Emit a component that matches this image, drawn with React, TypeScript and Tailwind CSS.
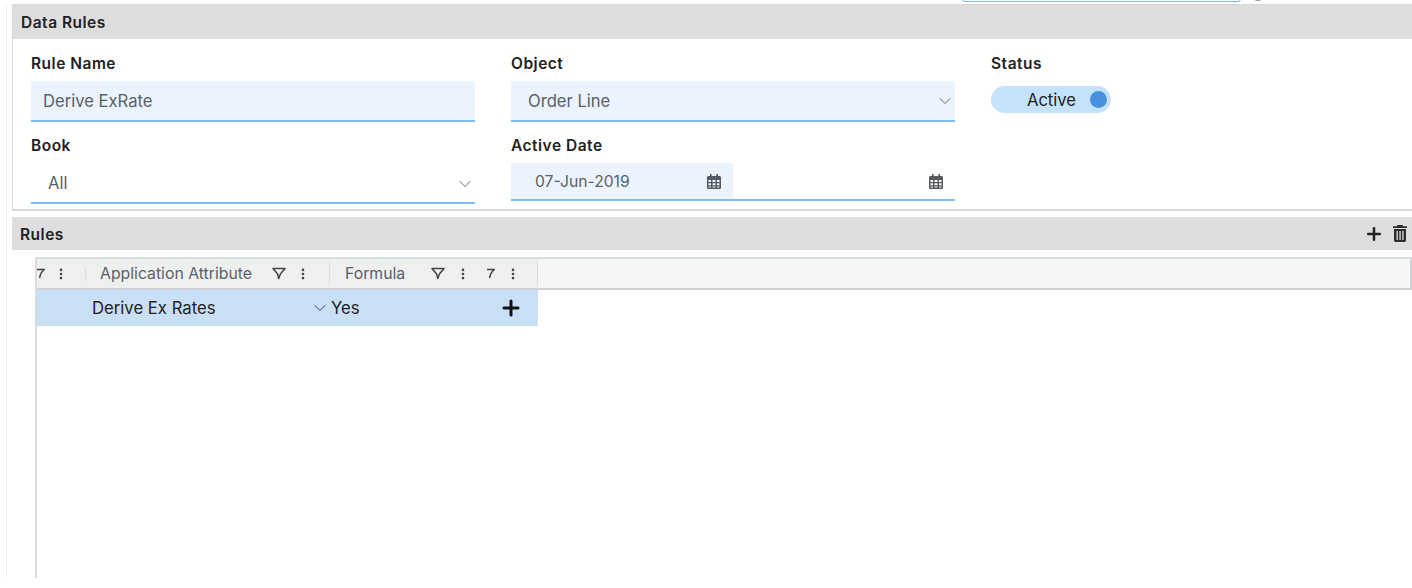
import { ChevronDown, EllipsisVertical, Plus } from "lucide-react";

const Calendar = () => (
  <svg width="14" height="15" viewBox="0 0 14 15" className="text-[#555a60]">
    <path
      fill="currentColor"
      fillRule="evenodd"
      d="M3 0h1.6v2h4.8V0H11v2h1.4c.9 0 1.6.7 1.6 1.6v9.8c0 .9-.7 1.6-1.6 1.6H1.6C.7 15 0 14.300 0 13.400V3.600C0 2.700.7 2 1.600 2H3V0zM1.500 6v2h2.500V6H1.500zm4 0v2h3V6h-3zm4.500 0v2h2.500V6H10zM1.500 9.300v2h2.500v-2H1.500zm4 0v2h3v-2h-3zm4.500 0v2h2.500V9.300H10zM1.500 12.500v1h2.500v-1H1.500zm4 0v1h3v-1h-3zm4.500 0v1h2.500v-1H10z"
    />
  </svg>
);

const Trash = () => (
  <svg width="14" height="17" viewBox="0 0 14 17" className="text-[#2a2c2e]">
    <path
      fill="currentColor"
      fillRule="evenodd"
      d="M4.500 0h5l.8 1.300H14v1.700H0V1.300h3.700L4.500 0zM1 4h12v11.300c0 .9-.7 1.700-1.700 1.700H2.700C1.700 17 1 16.200 1 15.300V4zm2.500 2v9h1.300V6H3.500zm2.900 0v9h1.300V6H6.400zm2.900 0v9h1.300V6H9.300z"
    />
  </svg>
);

const Funnel = () => (
  <svg width="14" height="13" viewBox="0 0 14 13" fill="none" stroke="#444" strokeWidth="1.500" strokeLinejoin="round">
    <path d="M1 1.500h12L8.400 7 6.700 11.500 5.600 7z" />
  </svg>
);

// the funnel icon cut off by the scrolled column, reads like a 7
const ClippedFunnel = () => (
  <svg width="8" height="11" viewBox="0 0 8 11" fill="none" stroke="#444" strokeWidth="1.500">
    <path d="M0 1.500h7L3.800 5.500 2.500 10" />
  </svg>
);

const Dots = () => <EllipsisVertical size={14} strokeWidth={2.500} className="text-[#444]" />;

const Label = ({ children }: { children: string }) => (
  <div className="h-[18px] pt-[1px] text-[15.500px] leading-[18px] font-semibold tracking-[0.5px] text-[#222]">
    {children}
  </div>
);

export default function App() {
  return (
    <div className="h-[588px] w-[1412px] overflow-hidden bg-white font-['Inter',sans-serif]">
      {/* bit of the page toolbar, cut off at the top */}
      <div className="flex h-[4px] items-end overflow-hidden pl-[962px]">
        <div className="mb-[2px] h-[8px] w-[279px] shrink-0 rounded-[3px] border border-[#7db4e8]" />
        <div className="mb-[3px] ml-[10px] h-[14px] w-[14px] shrink-0 rounded-full border-2 border-[#999]" />
      </div>

      <div className="ml-[6px] h-[574px] border-l border-[#f0f0f0] pl-[5px]">
        {/* Data Rules */}
        <div className="border-b-2 border-l border-t border-[#d8d8d8]">
          <div className="flex h-[34px] items-center bg-[#dedede] pl-2 pt-[2px] text-[15.500px] font-semibold tracking-[0.5px] text-[#222]">
            Data Rules
          </div>
          <div className="grid grid-cols-[444px_444px_1fr] gap-x-[36px] gap-y-[14px] pb-[5px] pl-[18px] pt-[15px]">
            <div>
              <Label>Rule Name</Label>
              <div className="mt-[9px] flex h-[41px] items-center border-b-2 border-[#7dbcee] bg-[#ebf4fe] pl-3 pt-[2px] text-[16.600px] text-[#5a6068]">
                Derive ExRate
              </div>
            </div>
            <div>
              <Label>Object</Label>
              <div className="mt-[9px] flex h-[41px] items-center justify-between border-b-2 border-[#7dbcee] bg-[#ebf4fe] pl-[17px] text-[16.600px] text-[#5a6068]">
                <span className="pt-[2px]">Order Line</span>
                <ChevronDown size={20} strokeWidth={1.200} className="text-[#666]" />
              </div>
            </div>
            <div>
              <Label>Status</Label>
              <div className="mt-[14px] flex h-[27px] w-[120px] items-center justify-end rounded-full bg-[#c4e2fb] pr-[4px] text-[16.600px] text-[#222]">
                <span className="mr-[14px] pt-[2px]">Active</span>
                <span className="h-[17px] w-[17px] rounded-full bg-[#4a90e0]" />
              </div>
            </div>
            <div>
              <Label>Book</Label>
              <div className="mt-[9px] flex h-[41px] items-center justify-between border-b-2 border-[#7dbcee] pl-[17px] pt-[2px] text-[16.600px] text-[#5a6068]">
                All
                <ChevronDown size={20} strokeWidth={1.200} className="text-[#666]" />
              </div>
            </div>
            <div>
              <Label>Active Date</Label>
              <div className="mt-[9px] flex h-[38px] border-b-2 border-[#7dbcee] text-[15.700px] text-[#5a6068]">
                <div className="flex w-[222px] items-center justify-between bg-[#ebf4fe] pl-[24px] pr-[12px]">
                  <span className="pt-[2px]">07-Jun-2019</span>
                  <Calendar />
                </div>
                <div className="flex flex-1 items-center justify-end pr-[12px]">
                  <Calendar />
                </div>
              </div>
            </div>
          </div>
        </div>

        {/* Rules */}
        <div className="mt-[6px]">
          <div className="flex h-[33px] items-center justify-between bg-[#dedede] pl-2 pr-[5px] text-[15.500px] font-semibold tracking-[0.5px] text-[#222]">
            <span className="pt-[2px]">Rules</span>
            <div className="flex items-center gap-[9px]">
              <Plus size={20} strokeWidth={3} className="text-[#222]" />
              <Trash />
            </div>
          </div>
          <div className="ml-[23px] mt-[7px] h-[321px] border-l-2 border-t-2 border-[#d8dcdf]">
            <div className="flex h-[31px] border-b-2 border-r-2 border-[#cfd2d4] bg-[#f5f7f7] text-[15.800px] text-[#5c6066]">
              <div className="flex h-full w-[501px] items-center bg-[#eef0f0]">
                <div className="flex w-[49px] items-center border-r border-[#dcdcdc]">
                  <ClippedFunnel />
                  <span className="ml-[9px]"><Dots /></span>
                </div>
                <div className="flex w-[244px] items-center border-r border-[#dcdcdc] pl-[14px]">
                  <span>Application Attribute</span>
                  <span className="ml-[20px]"><Funnel /></span>
                  <span className="ml-[10px]"><Dots /></span>
                </div>
                <div className="flex w-[208px] items-center border-r border-[#dcdcdc] pl-[15px]">
                  <span>Formula</span>
                  <span className="ml-[26px]"><Funnel /></span>
                  <span className="ml-[11px]"><Dots /></span>
                  <span className="ml-[17px]"><ClippedFunnel /></span>
                  <span className="ml-[11px]"><Dots /></span>
                </div>
              </div>
            </div>
            <div className="flex h-[36px] w-[501px] items-center bg-[#c8dff6] pl-[55px] text-[16.700px] text-[#222]">
              <span className="w-[218px] pt-[2px]">Derive Ex Rates</span>
              <ChevronDown size={20} strokeWidth={1.200} className="text-[#444]" />
              <span className="ml-[1px] pt-[2px]">Yes</span>
              <Plus size={24} strokeWidth={3} className="ml-[139px] text-[#111]" />
            </div>
          </div>
        </div>
      </div>
    </div>
  );
}
